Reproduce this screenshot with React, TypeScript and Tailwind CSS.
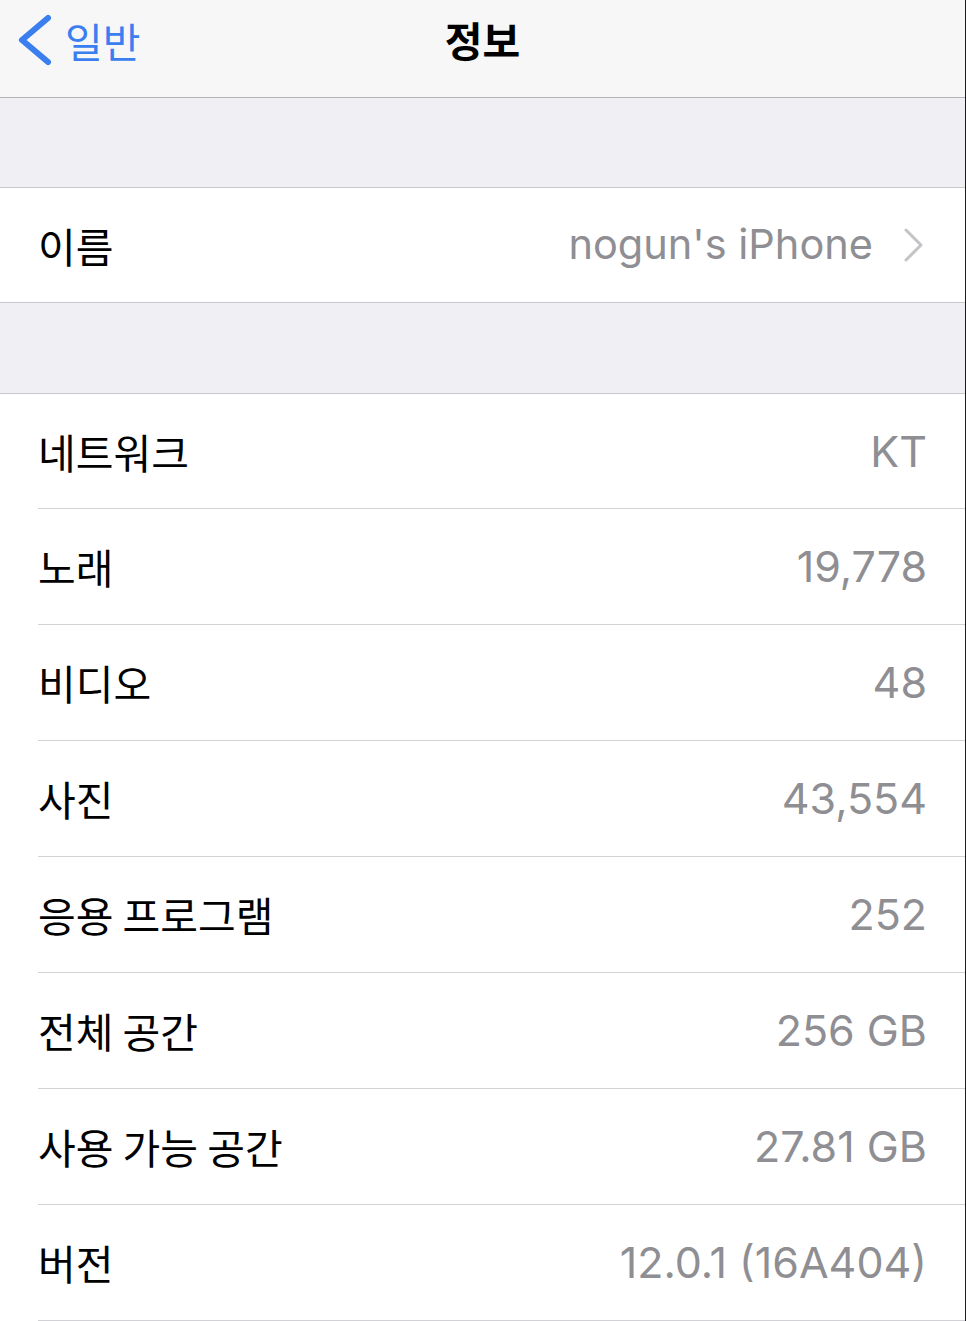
const rows = [
  { label: "네트워크", value: "KT" },
  { label: "노래", value: "19,778" },
  { label: "비디오", value: "48" },
  { label: "사진", value: "43,554" },
  { label: "응용 프로그램", value: "252" },
  { label: "전체 공간", value: "256 GB" },
  { label: "사용 가능 공간", value: "27.81 GB" },
  { label: "버전", value: "12.0.1 (16A404)" },
];

const ko = { fontFamily: '"Noto Sans CJK KR", "Noto Sans", sans-serif' };
const latin = { fontFamily: 'Inter, "Noto Sans CJK KR", sans-serif' };

export default function App() {
  return (
    <div className="w-[966px] h-[1321px] overflow-hidden bg-white border-r border-[#1c1c1c]">
      {/* nav bar */}
      <div className="h-[98px] bg-[#f7f7f8] border-b border-[#b3b3b6]">
        <div className="relative h-[80px] flex items-center">
          <div className="flex items-center text-[#3a7ef0] pl-[15px]">
            <svg width="40" height="52" viewBox="0 0 40 52" fill="none">
              <polyline
                points="33,4 7,26 33,48"
                stroke="currentColor"
                strokeWidth="6"
                strokeLinecap="round"
                strokeLinejoin="round"
              />
            </svg>
            <span style={ko} className="text-[41px] ml-[10px] leading-none">일반</span>
          </div>
          <div
            style={ko}
            className="absolute inset-x-0 top-0 h-full flex items-center justify-center text-[41px] font-bold text-black pointer-events-none"
          >
            정보
          </div>
        </div>
      </div>

      {/* gap */}
      <div className="h-[90px] bg-[#efeff4] border-b border-[#c8c7cc]" />

      {/* name */}
      <div className="h-[115px] flex items-center justify-between pl-[38px] pr-[40px] border-b border-[#c8c7cc]">
        <span style={ko} className="text-[41px] text-black leading-none">이름</span>
        <div className="flex items-center gap-[30px]">
          <span style={latin} className="text-[41.5px] text-[#8e8e93] leading-none">nogun's iPhone</span>
          <svg width="22" height="36" viewBox="0 0 22 36" fill="none" className="text-[#c4c4c8]">
            <polyline
              points="3,3 18,18 3,33"
              stroke="currentColor"
              strokeWidth="3"
              strokeLinecap="round"
              strokeLinejoin="round"
            />
          </svg>
        </div>
      </div>

      {/* gap */}
      <div className="h-[91px] bg-[#efeff4] border-b border-[#c8c7cc]" />

      {/* info list */}
      <div className="pl-[38px]">
        {rows.map((r, i) => (
          <div
            key={r.label}
            className={
              (i === 0 ? "h-[115px] " : "h-[116px] ") +
              "flex items-center justify-between pr-[38px] border-b border-[#d1d1d6]"
            }
          >
            <span style={ko} className="text-[41px] text-black leading-none">{r.label}</span>
            <span style={latin} className="text-[43px] text-[#8e8e93] leading-none">{r.value}</span>
          </div>
        ))}
      </div>
    </div>
  );
}
